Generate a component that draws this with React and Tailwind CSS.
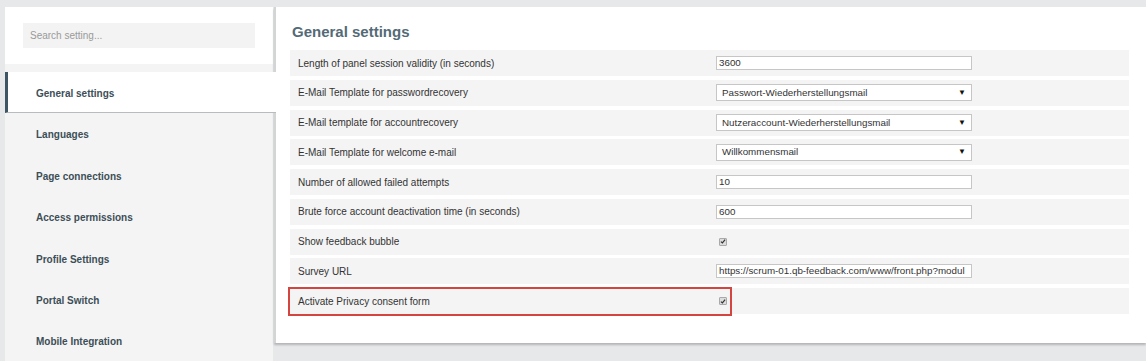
import React from "react";

const font = { fontFamily: '"Liberation Sans", Arial, sans-serif' };

const items = [
  "General settings",
  "Languages",
  "Page connections",
  "Access permissions",
  "Profile Settings",
  "Portal Switch",
  "Mobile Integration",
];

function Check() {
  return (
    <div className="w-[8px] h-[8px] rounded-[1px] border border-[#a9a9a9] bg-[#dcdcdc] flex items-center justify-center">
      <svg width="7" height="7" viewBox="0 0 8 8">
        <path d="M1.2 4.2 L3.2 6 L6.8 1.6" fill="none" stroke="#333" strokeWidth="1.6" />
      </svg>
    </div>
  );
}

function TextInput({ value }) {
  return (
    <div className="w-[256px] h-[14px] bg-white border border-[#c6c6c6] flex items-center pl-[2px] text-[9.8px] text-[#333] overflow-hidden whitespace-nowrap leading-none">
      {value}
    </div>
  );
}

function Select({ value }) {
  return (
    <div className="w-[256px] h-[17px] bg-white border border-[#c6c6c6] flex items-center justify-between pl-[5px] pr-[5px] text-[9.8px] text-[#333] leading-none">
      <span>{value}</span>
      <span className="text-[8px] text-[#111]">▼</span>
    </div>
  );
}

const rows = [
  { label: "Length of panel session validity (in seconds)", el: <TextInput value="3600" /> },
  { label: "E-Mail Template for passwordrecovery", el: <Select value="Passwort-Wiederherstellungsmail" /> },
  { label: "E-Mail template for accountrecovery", el: <Select value="Nutzeraccount-Wiederherstellungsmail" /> },
  { label: "E-Mail Template for welcome e-mail", el: <Select value="Willkommensmail" /> },
  { label: "Number of allowed failed attempts", el: <TextInput value="10" /> },
  { label: "Brute force account deactivation time (in seconds)", el: <TextInput value="600" /> },
  { label: "Show feedback bubble", el: <div className="pl-[3px]"><Check /></div> },
  { label: "Survey URL", el: <TextInput value="https://scrum-01.qb-feedback.com/www/front.php?modul" /> },
  { label: "Activate Privacy consent form", el: <div className="pl-[3px]"><Check /></div>, hl: true },
];

export default function App() {
  return (
    <div style={font} className="w-full h-[361px] bg-[#e7e8ea] flex pt-[7px] pl-[5px] overflow-hidden">
      <div className="w-[268px] shrink-0 flex flex-col">
        <div className="h-[58px] bg-white pt-[16px] pl-[18px]">
          <div className="w-[232px] h-[25px] bg-[#f3f3f3] flex items-center pl-[7px] text-[10px] text-[#9a9a9a]">
            Search setting...
          </div>
        </div>
        <div className="flex-1 bg-[#f4f4f4] pt-[8px] flex flex-col">
          {items.map((it, i) =>
            i === 0 ? (
              <div
                key={it}
                className="relative z-10 w-[271px] h-[41px] bg-white border-l-[3px] border-[#3e5663] border-b border-b-[#b9bcbe] flex items-center pl-[28px] pt-[3px] text-[10px] font-bold text-[#3c4e57]"
              >
                {it}
              </div>
            ) : (
              <div key={it} className="h-[41.4px] flex items-center pl-[31px] pt-[3px] text-[10px] font-bold text-[#3c4e57]">
                {it}
              </div>
            )
          )}
        </div>
      </div>
      <div className="flex-1 self-start ml-[1px] h-[336px] bg-white border-l-2 border-[#d3d4d6] shadow-[0_2px_2px_rgba(0,0,0,0.22)] pt-[16px] pl-[14px] pr-[17px]">
        <div className="h-[18px] text-[15px] leading-[18px] font-bold text-[#546a76] pl-[2px] mb-[9px]">General settings</div>
        <div className="flex flex-col gap-[3.75px]">
          {rows.map((r) => (
            <div key={r.label} className="relative h-[26px] bg-[#f4f4f4] flex items-center">
              <div className="w-[426px] shrink-0 pl-[8px] text-[10px] text-[#333]">{r.label}</div>
              {r.el}
              {r.hl && (
                <div className="absolute left-[-2px] top-[-1px] w-[444px] h-[29px] border-2 border-[#d4453f]" />
              )}
            </div>
          ))}
        </div>
      </div>
    </div>
  );
}
